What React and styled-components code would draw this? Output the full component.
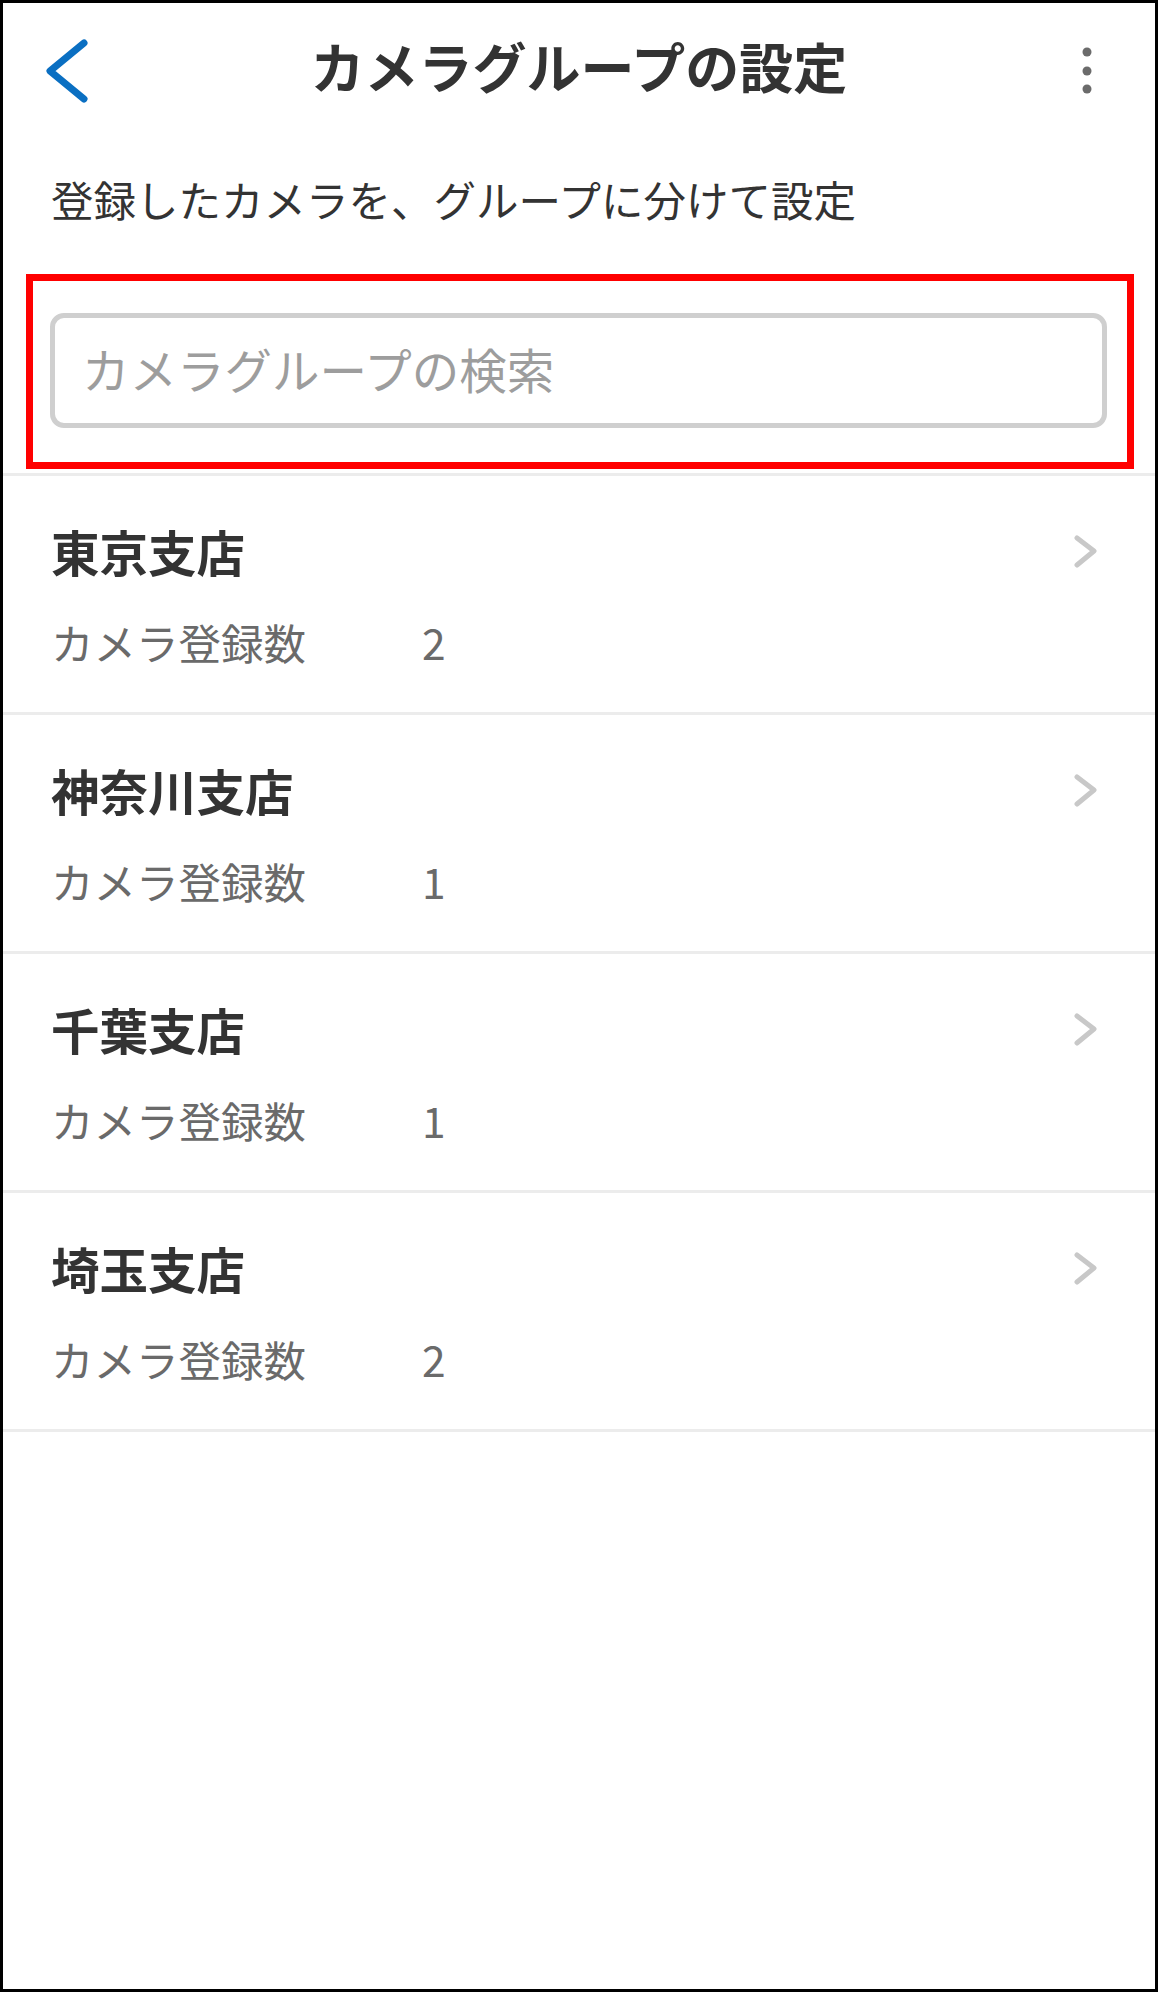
import styled, { createGlobalStyle } from "styled-components";

const GlobalStyle = createGlobalStyle`
    html, body {
        margin: 0;
        padding: 0;
        background: #fff;
    }
    body {
        font-family: "Noto Sans CJK JP", "Noto Sans", sans-serif;
    }
`

const Screen = styled.div`
    box-sizing: border-box;
    width: 1158px;
    height: 1992px;
    border: 3px solid #000;
    background: #fff;
    display: flex;
    flex-direction: column;
`

const Header = styled.header`
    height: 136px;
    display: grid;
    grid-template-columns: 1fr auto 1fr;
    align-items: center;
`

const BackButton = styled.button`
    justify-self: start;
    margin-left: 41px;
    padding: 0;
    border: none;
    background: none;
    display: flex;
`

const MenuButton = styled(BackButton)`
    justify-self: end;
    margin-left: 0;
    margin-right: 60px;
`

const Title = styled.h1`
    margin: 0;
    padding-bottom: 10px;
    font-size: 54px;
    font-weight: 700;
    line-height: 70px;
    color: #333;
    letter-spacing: 0;
`

const Lead = styled.p`
    margin: 0;
    padding: 30px 0 0 48px;
    font-size: 42.5px;
    line-height: 60px;
    color: #333;
`

const SearchSection = styled.div`
    padding: 45px 21px 4px 23px;
    border-bottom: 3px solid #ececec;
`

const Highlight = styled.div`
    border: 7px solid #ff0000;
    padding: 32px 20px 34px 17px;
`

const SearchInput = styled.input`
    box-sizing: border-box;
    display: block;
    width: 100%;
    height: 115px;
    border: 5px solid #cfcfcf;
    border-radius: 14px;
    padding: 0 0 4px 27px;
    font-family: "Noto Sans CJK JP", "Noto Sans", sans-serif;
    font-size: 47.5px;
    color: #333;
    outline: none;

    &::placeholder {
        color: #9d9d9d;
    }
`

const GroupList = styled.ul`
    margin: 0;
    padding: 0;
    list-style: none;
`

const GroupRow = styled.li`
    padding: 44px 58px 40px 48px;
    border-bottom: 3px solid #ececec;
`

const RowHead = styled.div`
    display: flex;
    align-items: center;
    justify-content: space-between;
`

const GroupName = styled.h2`
    margin: 0;
    font-size: 48.5px;
    font-weight: 700;
    line-height: 62px;
    color: #333;
`

const CountLine = styled.div`
    margin-top: 30px;
    display: flex;
    font-size: 42.5px;
    line-height: 60px;
    color: #6a6a6a;

    span + span {
        margin-left: 116px;
    }
`

const groups = [
    { name: "東京支店", count: 2 },
    { name: "神奈川支店", count: 1 },
    { name: "千葉支店", count: 1 },
    { name: "埼玉支店", count: 2 },
]

const BackIcon = () => (
    <svg width="48" height="72" viewBox="0 0 48 72">
        <polyline points="40,8 6,36 40,64" fill="none" stroke="#0a6fc2" strokeWidth="7" strokeLinecap="round" strokeLinejoin="round" />
    </svg>
)

const DotsIcon = () => (
    <svg width="16" height="56" viewBox="0 0 16 56">
        <circle cx="8" cy="9" r="4.5" fill="#6b6b6b" />
        <circle cx="8" cy="28" r="4.5" fill="#6b6b6b" />
        <circle cx="8" cy="46" r="4.5" fill="#6b6b6b" />
    </svg>
)

const ChevronIcon = () => (
    <svg width="24" height="36" viewBox="0 0 24 36">
        <polyline points="4,5 21,18 4,32" fill="none" stroke="#c8c8c8" strokeWidth="5" strokeLinecap="round" strokeLinejoin="round" />
    </svg>
)

const App = () => {
    return(
        <>
            <GlobalStyle />
            <Screen>
                <Header>
                    <BackButton aria-label="戻る"><BackIcon /></BackButton>
                    <Title>カメラグループの設定</Title>
                    <MenuButton aria-label="メニュー"><DotsIcon /></MenuButton>
                </Header>
                <Lead>登録したカメラを、グループに分けて設定</Lead>
                <SearchSection>
                    <Highlight>
                        <SearchInput placeholder="カメラグループの検索" />
                    </Highlight>
                </SearchSection>
                <GroupList>
                    {groups.map((g) => (
                        <GroupRow key={g.name}>
                            <RowHead>
                                <GroupName>{g.name}</GroupName>
                                <ChevronIcon />
                            </RowHead>
                            <CountLine>
                                <span>カメラ登録数</span>
                                <span>{g.count}</span>
                            </CountLine>
                        </GroupRow>
                    ))}
                </GroupList>
            </Screen>
        </>
    )
}

export default App
